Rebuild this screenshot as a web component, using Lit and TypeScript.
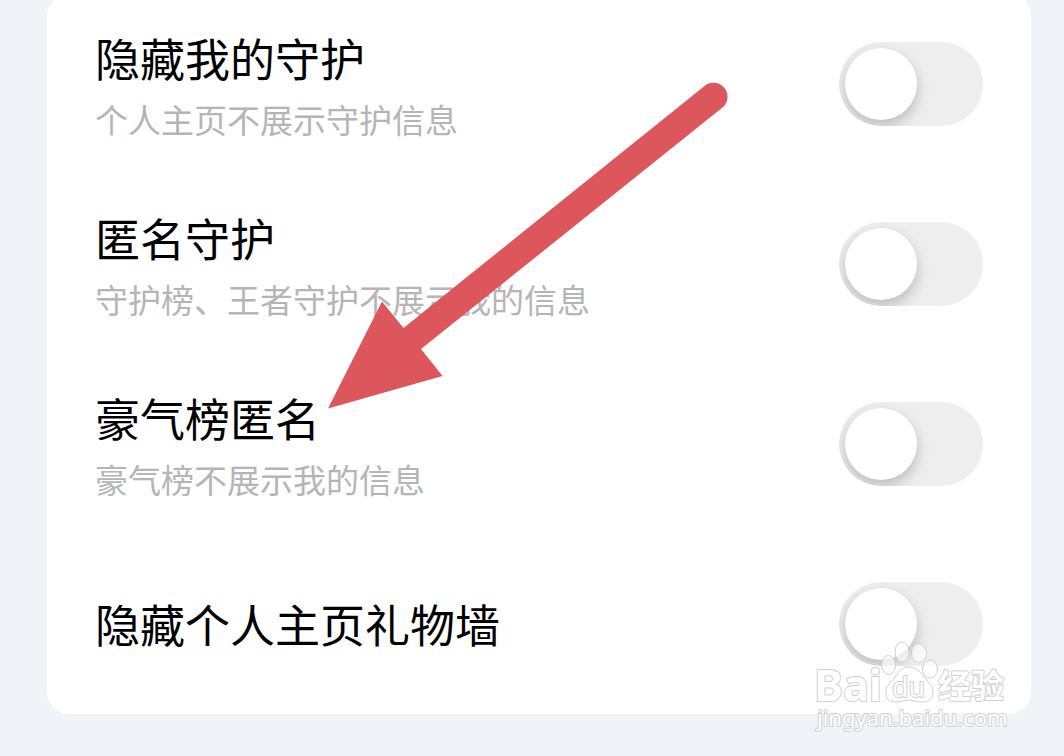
import { LitElement, html, css } from "lit";
import { customElement, property, state } from "lit/decorators.js";

interface Setting {
  id: string;
  title: string;
  note?: string;
  on: boolean;
}

@customElement("toggle-row")
class ToggleRow extends LitElement {
  @property() name = "";
  @property() heading = "";
  @property() note = "";
  @property({ type: Boolean }) on = false;

  static styles = css`
    :host {
      display: block;
    }
    .row {
      display: flex;
      align-items: center;
      justify-content: space-between;
      gap: 24px;
      min-height: 180px;
    }
    .text {
      display: flex;
      flex-direction: column;
      gap: 4px;
      min-width: 0;
    }
    .title {
      font-size: 45px;
      line-height: 66px;
      color: #000;
    }
    .note {
      margin: 0;
      font-size: 33px;
      line-height: 48px;
      color: #b5b5b7;
    }
    .switch {
      appearance: none;
      flex: none;
      box-sizing: border-box;
      width: 144px;
      height: 84px;
      margin: 0;
      padding: 6px;
      border-radius: 42px;
      background: #eee;
      overflow: hidden;
      cursor: pointer;
    }
    .switch::before {
      content: "";
      display: block;
      width: 72px;
      height: 72px;
      border-radius: 50%;
      background: #fff;
      box-shadow: 0 6px 14px rgba(0, 0, 0, 0.22);
      transition: margin 0.2s;
    }
    .switch:checked {
      background: #34c759;
    }
    .switch:checked::before {
      margin-left: 60px;
    }
  `;

  render() {
    return html`
      <div class="row">
        <div class="text">
          <label class="title" for=${this.name}>${this.heading}</label>
          ${this.note ? html`<p class="note">${this.note}</p>` : null}
        </div>
        <input class="switch" type="checkbox" role="switch" id=${this.name} .checked=${this.on} />
      </div>
    `;
  }
}

@customElement("app-root")
class AppRoot extends LitElement {
  @state() settings: Setting[] = [
    { id: "hide-guard", title: "隐藏我的守护", note: "个人主页不展示守护信息", on: false },
    { id: "anon-guard", title: "匿名守护", note: "守护榜、王者守护不展示我的信息", on: false },
    { id: "anon-rank", title: "豪气榜匿名", note: "豪气榜不展示我的信息", on: false },
    { id: "hide-gifts", title: "隐藏个人主页礼物墙", on: false },
  ];

  static styles = css`
    :host {
      display: block;
      position: relative;
      box-sizing: border-box;
      min-height: 100vh;
      overflow: hidden;
      padding: 0 33px 42px 47px;
      background: #f2f3f8;
      font-family: "Noto Sans CJK SC", sans-serif;
    }
    .card {
      margin-top: -6px;
      padding: 0 48px;
      border-radius: 22px;
      background: #fff;
    }
    .arrow {
      position: absolute;
      left: 328px;
      top: 82px;
      width: 400px;
      height: 328px;
      pointer-events: none;
    }
    .watermark {
      position: absolute;
      right: 48px;
      bottom: 18px;
      width: 208px;
      height: 100px;
      pointer-events: none;
    }
    .mark {
      fill: #fff;
      stroke: #d0d0d0;
      stroke-width: 2px;
      stroke-linejoin: round;
      paint-order: stroke;
    }
    .paw {
      fill: #fff;
      fill-opacity: 0.65;
      stroke: #cfcfcf;
      stroke-width: 1px;
    }
    .bai {
      font: 700 43px "Open Sans", sans-serif;
    }
    .du {
      font: 400 27px "Open Sans", sans-serif;
    }
    .han {
      font: 700 33px "Noto Sans CJK SC", sans-serif;
    }
    .site {
      font: 400 22px "Noto Sans", sans-serif;
    }
  `;

  render() {
    return html`
      <main class="card">
        ${this.settings.map(
          (s) => html`<toggle-row .name=${s.id} .heading=${s.title} .note=${s.note ?? ""} .on=${s.on}></toggle-row>`,
        )}
      </main>
      <svg class="arrow" viewBox="328 82 400 328" aria-hidden="true">
        <path
          fill="#dc565b"
          d="M328 408.500 L382 301.500 L403.500 328 L704.500 86 A14 14 0 0 1 722.500 107.500 L421 349 L442.500 376 Z"
        />
      </svg>
      <svg class="watermark" viewBox="808 638 208 100" role="img" aria-label="Baidu 经验">
        <g class="paw">
          <ellipse cx="888.500" cy="665" rx="7" ry="9.500" />
          <ellipse cx="902" cy="652" rx="7" ry="10" />
          <ellipse cx="919" cy="653" rx="7.500" ry="9.500" />
          <ellipse cx="930" cy="669" rx="7.500" ry="9" />
          <path
            d="M908 667 C916 667 921 672 925 678 C929 683 933 686 933 692 C933 699 929 702 922 702 C917 702 913 700 908 700 C904 700 901 702 896 702 C889 702 885 698 886 691 C886 685 892 682 896 676 C899 671 902 667 908 667 Z"
          />
        </g>
        <text class="mark bai" x="814" y="701">Bai</text>
        <text class="mark du" x="892" y="697">du</text>
        <text class="mark han" x="938" y="698">经验</text>
        <text class="mark site" x="817" y="726">jingyan.baidu.com</text>
      </svg>
    `;
  }
}
